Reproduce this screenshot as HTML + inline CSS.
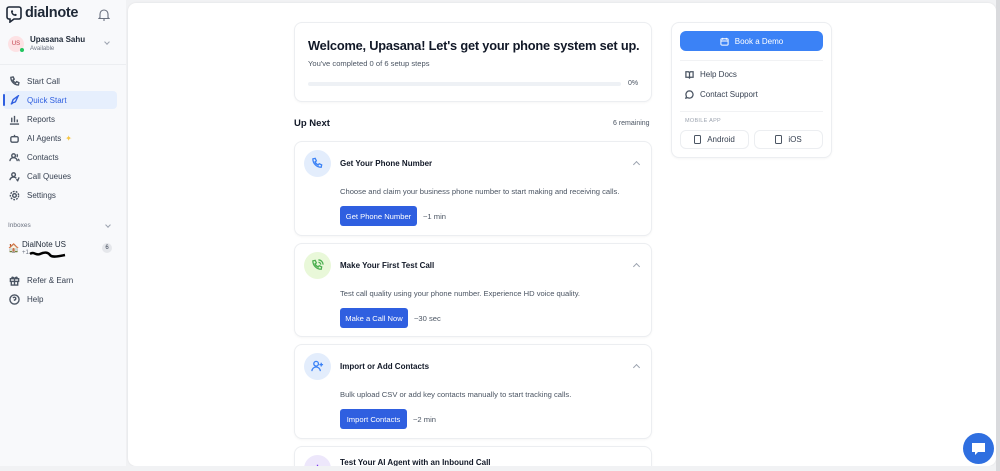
<!DOCTYPE html>
<html><head><meta charset="utf-8"><style>
*{box-sizing:border-box;margin:0;padding:0}
html,body{width:1000px;height:471px;overflow:hidden}
body{background:#f1f2f4;font-family:"Liberation Sans",sans-serif;color:#1f2937;position:relative;white-space:nowrap}
.side{position:absolute;left:0;top:0;width:126px;height:471px;background:#f8f9fb}
.main{position:absolute;left:128px;top:3px;width:868px;height:463px;background:#fff;border-radius:8px;box-shadow:0 0 2px rgba(0,0,0,.08)}
.abs{position:absolute}
.nav{position:absolute;left:3px;width:114px;height:18px;font-size:8px;color:#374151;display:flex;align-items:center;padding-left:6px;border-radius:4px}
.nav svg{width:11px;height:11px;margin-right:7px;stroke:#4b5563;fill:none;stroke-width:1.5}
.card{position:absolute;left:294px;width:358px;background:#fff;border:1px solid #eceef1;border-radius:8px;box-shadow:0 1px 2px rgba(0,0,0,.04);overflow:hidden}
.ic{position:absolute;left:9px;top:8px;width:27px;height:27px;border-radius:50%;display:flex;align-items:center;justify-content:center}
.ic svg{width:13px;height:13px;fill:none;stroke-width:1.4}
.ct{position:absolute;left:45px;top:17px;font-size:8px;font-weight:bold;color:#111827}
.chev{position:absolute;right:12px;top:20px;width:5px;height:5px;border-left:1px solid #9ca3af;border-top:1px solid #9ca3af;transform:rotate(45deg)}
.cd{position:absolute;left:45px;top:45px;font-size:7.6px;color:#4b5563}
.btn{position:absolute;left:45px;top:64px;height:20px;background:#2f5fe0;color:#fff;font-size:7.6px;border-radius:3px;display:flex;align-items:center;justify-content:center}
.tm{position:absolute;top:70px;font-size:7.6px;color:#4b5563}
.rl{position:absolute;left:13px;font-size:8px;color:#374151;display:flex;align-items:center}
.rl svg{width:9px;height:9px;margin-right:6px;fill:none;stroke:#4b5563;stroke-width:1.4}
.mb{position:absolute;top:107px;width:69px;height:19px;border:1px solid #eceef1;border-radius:6px;font-size:8px;color:#374151;display:flex;align-items:center;justify-content:center}
</style></head><body>
<div class="side">
 <svg class="abs" style="left:6px;top:6px" width="16" height="17" viewBox="0 0 16 17"><path d="M3 1h10a2 2 0 0 1 2 2v8a2 2 0 0 1-2 2H8l-4 3v-3H3a2 2 0 0 1-2-2V3a2 2 0 0 1 2-2z" fill="none" stroke="#1f2937" stroke-width="1.6"/><path d="M5 5c0 3 2 5 5 5l1-1.3-1.6-1-1 .6c-.8-.4-1.4-1-1.8-1.8l.6-1-1-1.6z" fill="#1f2937"/></svg>
 <div class="abs" style="left:25px;top:5px;font-size:14.5px;font-weight:bold;color:#1f2937;letter-spacing:-.3px">dialnote</div>
 <svg class="abs" style="left:98px;top:8px" width="12" height="13" viewBox="0 0 12 13" fill="none" stroke="#6b7280" stroke-width="1.1"><path d="M2 9.5V6a4 4 0 0 1 8 0v3.5l1 1H1z"/><path d="M5 12h2"/></svg>
 <div class="abs" style="left:8px;top:36px;width:16px;height:16px;border-radius:50%;background:#fde2e4;color:#c2414b;font-size:6px;display:flex;align-items:center;justify-content:center">US</div>
 <div class="abs" style="left:20px;top:48px;width:4px;height:4px;border-radius:50%;background:#22c55e"></div>
 <div class="abs" style="left:30px;top:35px;font-size:8px;font-weight:bold;color:#1f2937">Upasana Sahu</div>
 <div class="abs" style="left:30px;top:46px;font-size:6px;color:#6b7280">Available</div>
 <div class="abs" style="left:105px;top:40px;width:4px;height:4px;border-right:1px solid #9ca3af;border-bottom:1px solid #9ca3af;transform:rotate(45deg)"></div>
 <div class="abs" style="left:0;top:64px;width:126px;height:1px;background:#eceef1"></div>
 <div class="nav" style="top:72px"><svg viewBox="0 0 12 12"><path d="M2 1.5l2.5-.5 1.2 2.5-1.4 1a6 6 0 0 0 3 3l1-1.4 2.5 1.2-.5 2.5C6 10 2 6 2 1.5z"/></svg>Start Call</div>
 <div class="nav" style="top:91px;background:#e6effd;color:#2f5fe0"><svg viewBox="0 0 12 12" style="stroke:#2f5fe0"><path d="M3 9l1.5-4L10 1 7 7.5 3 9zM2 10l2-1"/></svg>Quick Start</div>
 <div class="abs" style="left:3px;top:94px;width:2px;height:12px;background:#2f5fe0;border-radius:1px"></div>
 <div class="nav" style="top:110px"><svg viewBox="0 0 12 12"><path d="M1 11h10M3 9V4M6 9V2M9 9V6"/></svg>Reports</div>
 <div class="nav" style="top:129px"><svg viewBox="0 0 12 12"><rect x="2" y="4" width="8" height="6" rx="1.5"/><path d="M6 4V2M4.5 7h0M7.5 7h0"/></svg>AI Agents <span style="color:#f5c542;margin-left:4px">✦</span></div>
 <div class="nav" style="top:148px"><svg viewBox="0 0 12 12"><circle cx="5" cy="4" r="2"/><path d="M1 10a4 4 0 0 1 8 0M8.5 2.5a2 2 0 0 1 0 3M10 7.5a3 3 0 0 1 1 2.5"/></svg>Contacts</div>
 <div class="nav" style="top:167px"><svg viewBox="0 0 12 12"><circle cx="5" cy="4" r="2"/><path d="M1 10a4 4 0 0 1 7-2M8 9l1.5 1.5L11 7"/></svg>Call Queues</div>
 <div class="nav" style="top:186px"><svg viewBox="0 0 12 12"><circle cx="6" cy="6" r="2"/><circle cx="6" cy="6" r="4.5" stroke-dasharray="2 1.2"/></svg>Settings</div>
 <div class="abs" style="left:8px;top:222px;font-size:6.5px;color:#6b7280">Inboxes</div>
 <div class="abs" style="left:106px;top:223px;width:4px;height:4px;border-right:1px solid #9ca3af;border-bottom:1px solid #9ca3af;transform:rotate(45deg)"></div>
 <div class="abs" style="left:8px;top:243px;font-size:9px">🏠</div>
 <div class="abs" style="left:22px;top:240px;font-size:8px;color:#1f2937">DialNote US</div>
 <div class="abs" style="left:22px;top:250px;font-size:6px;color:#6b7280">+1</div>
 <svg class="abs" style="left:29px;top:250px" width="38" height="8"><path d="M1 4c4-3 6 2 10 0s8-2 10 1 10 1 15 0" stroke="#000" stroke-width="2.5" fill="none"/></svg>
 <div class="abs" style="left:102px;top:243px;width:10px;height:10px;border-radius:50%;background:#e5e7eb;font-size:6px;color:#374151;display:flex;align-items:center;justify-content:center">6</div>
 <div class="nav" style="top:271px"><svg viewBox="0 0 12 12"><rect x="1.5" y="4" width="9" height="3"/><path d="M2.5 7v4h7V7M6 4v7M6 4C4 1 2 3 4 4M6 4c2-3 4-1 2 0"/></svg>Refer &amp; Earn</div>
 <div class="nav" style="top:290px"><svg viewBox="0 0 12 12"><circle cx="6" cy="6" r="5"/><path d="M4.5 4.5a1.5 1.5 0 1 1 1.5 2V7.5M6 9h0"/></svg>Help</div>
</div>
<div class="main"></div>

<div class="card" style="top:22px;height:80px">
 <div class="abs" style="left:13px;top:15px;font-size:12.8px;font-weight:bold;color:#111827;letter-spacing:-.2px">Welcome, Upasana! Let's get your phone system set up.</div>
 <div class="abs" style="left:13px;top:36px;font-size:7.6px;color:#4b5563">You've completed 0 of 6 setup steps</div>
 <div class="abs" style="left:13px;top:59px;width:313px;height:4px;border-radius:2px;background:#eef1f5"></div>
 <div class="abs" style="left:333px;top:57px;font-size:7px;color:#4b5563">0%</div>
</div>
<div class="abs" style="left:294px;top:118px;font-size:9.5px;font-weight:bold;color:#111827">Up Next</div>
<div class="abs" style="left:613px;top:120px;font-size:7px;color:#4b5563">6 remaining</div>

<div class="card" style="top:141px;height:95px">
 <div class="ic" style="background:#e3edfc"><svg viewBox="0 0 14 14" stroke="#3b82f6"><path d="M2 2l2.5-.5 1.3 2.7-1.5 1a7 7 0 0 0 3.5 3.5l1-1.5 2.7 1.3L11 11C6 11 2 7 2 2z"/></svg></div>
 <div class="ct">Get Your Phone Number</div><div class="chev"></div>
 <div class="cd">Choose and claim your business phone number to start making and receiving calls.</div>
 <div class="btn" style="width:77px">Get Phone Number</div><div class="tm" style="left:128px">~1 min</div>
</div>
<div class="card" style="top:243px;height:94px">
 <div class="ic" style="background:#e9f8d9"><svg viewBox="0 0 14 14" stroke="#4caf50"><path d="M2 2l2.5-.5 1.3 2.7-1.5 1a7 7 0 0 0 3.5 3.5l1-1.5 2.7 1.3L11 11C6 11 2 7 2 2zM8 1a5 5 0 0 1 5 5M8 3.5A2.5 2.5 0 0 1 10.5 6"/></svg></div>
 <div class="ct">Make Your First Test Call</div><div class="chev"></div>
 <div class="cd">Test call quality using your phone number. Experience HD voice quality.</div>
 <div class="btn" style="width:68px">Make a Call Now</div><div class="tm" style="left:119px">~30 sec</div>
</div>
<div class="card" style="top:344px;height:95px">
 <div class="ic" style="background:#e3edfc"><svg viewBox="0 0 14 14" stroke="#3b82f6"><circle cx="5.5" cy="4" r="2.5"/><path d="M1 12a4.5 4.5 0 0 1 9 0M11 3v4M9 5h4"/></svg></div>
 <div class="ct">Import or Add Contacts</div><div class="chev"></div>
 <div class="cd">Bulk upload CSV or add key contacts manually to start tracking calls.</div>
 <div class="btn" style="width:67px">Import Contacts</div><div class="tm" style="left:118px">~2 min</div>
</div>
<div class="card" style="top:446px;height:40px">
 <div class="ic" style="background:#ede7fb"><svg viewBox="0 0 14 14" stroke="#7c3aed"><rect x="3" y="6" width="8" height="6" rx="1.5"/><path d="M7 6V3"/></svg></div>
 <div class="ct" style="top:11px">Test Your AI Agent with an Inbound Call</div>
</div>
<div class="abs" style="left:0;top:466px;width:1000px;height:5px;background:#f1f2f4"></div>

<div class="card" style="left:671px;top:22px;width:161px;height:136px">
 <div class="abs" style="left:8px;top:8px;width:143px;height:20px;border-radius:6px;background:#3b82f6;color:#fff;font-size:8px;display:flex;align-items:center;justify-content:center"><svg width="9" height="9" viewBox="0 0 10 10" fill="none" stroke="#fff" stroke-width="1.1" style="margin-right:6px"><rect x="1" y="2" width="8" height="7" rx="1"/><path d="M1 4.5h8M3 1v2M7 1v2"/></svg>Book a Demo</div>
 <div class="abs" style="left:8px;top:37px;width:143px;height:1px;background:#f1f2f4"></div>
 <div class="rl" style="top:47px"><svg viewBox="0 0 10 10"><path d="M1 2h3l1 1 1-1h3v6H6L5 9 4 8H1zM5 3v6"/></svg>Help Docs</div>
 <div class="rl" style="top:67px"><svg viewBox="0 0 10 10"><path d="M5 1a4 4 0 1 1-2 7.5L1 9l.6-2A4 4 0 0 1 5 1z"/></svg>Contact Support</div>
 <div class="abs" style="left:8px;top:88px;width:143px;height:1px;background:#f1f2f4"></div>
 <div class="abs" style="left:13px;top:95px;font-size:5.5px;color:#9ca3af;letter-spacing:.3px">MOBILE APP</div>
 <div class="mb" style="left:8px"><svg width="7" height="9" viewBox="0 0 7 9" fill="none" stroke="#4b5563" style="margin-right:6px"><rect x=".5" y=".5" width="6" height="8" rx="1"/></svg>Android</div>
 <div class="mb" style="left:82px"><svg width="7" height="9" viewBox="0 0 7 9" fill="none" stroke="#4b5563" style="margin-right:6px"><rect x=".5" y=".5" width="6" height="8" rx="1"/></svg>iOS</div>
</div>
<div class="abs" style="left:996px;top:0;width:4px;height:471px;background:#d9dadd"></div>
<div class="abs" style="left:963px;top:433px;width:31px;height:31px;border-radius:50%;background:#2f6fe0;display:flex;align-items:center;justify-content:center"><svg width="15" height="14" viewBox="0 0 15 14"><path d="M1 1h13v9H7l-3 3v-3H1z" fill="#fff"/></svg></div>
</body></html>
